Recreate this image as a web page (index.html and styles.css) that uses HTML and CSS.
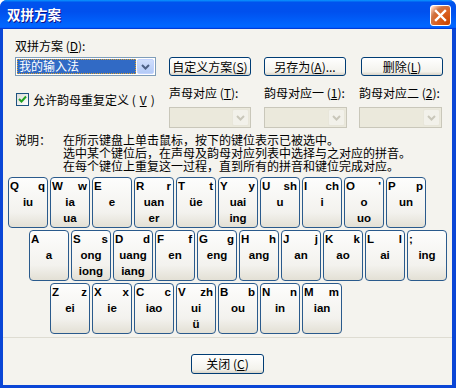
FILE: index.html
```html
<!DOCTYPE html>
<html lang="zh-CN">
<head>
    <meta charset="UTF-8">
    <title>双拼方案</title>
    <link rel="stylesheet" href="styles.css">
</head>
<body>

<div class="window">
    <div class="titlebar">
        <span class="title">双拼方案</span>
        <button class="close-x" aria-label="关闭">
            <svg width="13" height="13" viewBox="0 0 13 13"><path d="M2 2 L11 11 M11 2 L2 11" stroke="#fff" stroke-width="2.4" stroke-linecap="square"/></svg>
        </button>
    </div>

    <div class="client">
        <!-- 上部の設定欄 -->
        <div class="top-grid">
            <div class="lbl scheme-lbl">双拼方案 (<u>D</u>):</div>

            <div class="combo active">
                <div class="value"><span>我的输入法</span></div>
                <div class="arrow"><svg width="9" height="6" viewBox="0 0 9 6"><path d="M1 1 L4.5 4.5 L8 1" fill="none" stroke="#4d6185" stroke-width="2"/></svg></div>
            </div>
            <button class="btn">自定义方案(<u>S</u>)</button>
            <button class="btn">另存为(<u>A</u>)...</button>
            <button class="btn btn-del">删除(<u>L</u>)</button>

            <label class="check-row">
                <span class="checkbox"><svg width="9" height="9" viewBox="0 0 9 9"><path d="M1 4 L3.5 6.5 L8 1.5" fill="none" stroke="#21a121" stroke-width="2"/></svg></span>
                允许韵母重复定义 (<u>V</u>)
            </label>
            <div class="lbl map-lbl">声母对应 (<u>T</u>):</div>
            <div class="lbl map-lbl">韵母对应一 (<u>1</u>):</div>
            <div class="lbl map-lbl">韵母对应二 (<u>2</u>):</div>

            <div class="combo disabled c2"><div class="value"></div><div class="arrow"><svg width="9" height="6" viewBox="0 0 9 6"><path d="M1 1 L4.5 4.5 L8 1" fill="none" stroke="#c9c7ba" stroke-width="2"/></svg></div></div>
            <div class="combo disabled"><div class="value"></div><div class="arrow"><svg width="9" height="6" viewBox="0 0 9 6"><path d="M1 1 L4.5 4.5 L8 1" fill="none" stroke="#c9c7ba" stroke-width="2"/></svg></div></div>
            <div class="combo disabled"><div class="value"></div><div class="arrow"><svg width="9" height="6" viewBox="0 0 9 6"><path d="M1 1 L4.5 4.5 L8 1" fill="none" stroke="#c9c7ba" stroke-width="2"/></svg></div></div>
        </div>

        <!-- 説明 -->
        <div class="note">
            <span class="note-head">说明：</span>
            <div class="note-body">
                <p>在所示键盘上单击鼠标，按下的键位表示已被选中。</p>
                <p>选中某个键位后，在声母及韵母对应列表中选择与之对应的拼音。</p>
                <p>在每个键位上重复这一过程，直到所有的拼音和键位完成对应。</p>
            </div>
        </div>

        <!-- キーボード -->
        <div class="keyboard">
            <div class="key-row row1">
                <div class="key"><div class="key-top"><span>Q</span><span>q</span></div><div>iu</div></div>
                <div class="key"><div class="key-top"><span>W</span><span>w</span></div><div>ia</div><div>ua</div></div>
                <div class="key"><div class="key-top"><span>E</span><span></span></div><div>e</div></div>
                <div class="key"><div class="key-top"><span>R</span><span>r</span></div><div>uan</div><div>er</div></div>
                <div class="key"><div class="key-top"><span>T</span><span>t</span></div><div>üe</div></div>
                <div class="key"><div class="key-top"><span>Y</span><span>y</span></div><div>uai</div><div>ing</div></div>
                <div class="key"><div class="key-top"><span>U</span><span>sh</span></div><div>u</div></div>
                <div class="key"><div class="key-top"><span>I</span><span>ch</span></div><div>i</div></div>
                <div class="key"><div class="key-top"><span>O</span><span>'</span></div><div>o</div><div>uo</div></div>
                <div class="key"><div class="key-top"><span>P</span><span>p</span></div><div>un</div></div>
            </div>
            <div class="key-row row2">
                <div class="key"><div class="key-top"><span>A</span><span></span></div><div>a</div></div>
                <div class="key"><div class="key-top"><span>S</span><span>s</span></div><div>ong</div><div>iong</div></div>
                <div class="key"><div class="key-top"><span>D</span><span>d</span></div><div>uang</div><div>iang</div></div>
                <div class="key"><div class="key-top"><span>F</span><span>f</span></div><div>en</div></div>
                <div class="key"><div class="key-top"><span>G</span><span>g</span></div><div>eng</div></div>
                <div class="key"><div class="key-top"><span>H</span><span>h</span></div><div>ang</div></div>
                <div class="key"><div class="key-top"><span>J</span><span>j</span></div><div>an</div></div>
                <div class="key"><div class="key-top"><span>K</span><span>k</span></div><div>ao</div></div>
                <div class="key"><div class="key-top"><span>L</span><span>l</span></div><div>ai</div></div>
                <div class="key"><div class="key-top"><span>;</span><span></span></div><div>ing</div></div>
            </div>
            <div class="key-row row3">
                <div class="key"><div class="key-top"><span>Z</span><span>z</span></div><div>ei</div></div>
                <div class="key"><div class="key-top"><span>X</span><span>x</span></div><div>ie</div></div>
                <div class="key"><div class="key-top"><span>C</span><span>c</span></div><div>iao</div></div>
                <div class="key"><div class="key-top"><span>V</span><span>zh</span></div><div>ui</div><div>ü</div></div>
                <div class="key"><div class="key-top"><span>B</span><span>b</span></div><div>ou</div></div>
                <div class="key"><div class="key-top"><span>N</span><span>n</span></div><div>in</div></div>
                <div class="key"><div class="key-top"><span>M</span><span>m</span></div><div>ian</div></div>
            </div>
        </div>

        <div class="footer">
            <button class="btn close-btn">关闭 (<u>C</u>)</button>
        </div>
    </div>
</div>

</body>
</html>
```

FILE: styles.css
```css
body {
    margin: 0;
    font-family: "Noto Sans CJK SC", "DejaVu Sans", sans-serif;
    font-size: 12px;
    background: #fff;
}

/* ウィンドウ全体 */
.window {
    width: 456px;
    height: 388px;
    box-sizing: border-box;
    display: flex;
    flex-direction: column;
    background: #0a46d6;
    border-radius: 7px 7px 0 0;
    overflow: hidden;
}

.titlebar {
    flex: none;
    height: 29px;
    display: flex;
    justify-content: space-between;
    align-items: flex-start;
    padding: 0 5px 0 7px;
    background: linear-gradient(180deg, #0997ff, #0053ee 8%, #0050ee 40%, #0066ff 88%, #0066ff 93%, #005bff 95%, #003dd7 96%, #003dd7);
}
.title {
    color: #fff;
    font-weight: bold;
    font-size: 13.5px;
    line-height: 29px;
    text-shadow: 1px 1px #0f1089;
}
.close-x {
    width: 21px;
    height: 21px;
    margin-top: 5px;
    padding: 0;
    border: 1px solid #fff;
    border-radius: 3px;
    background: radial-gradient(circle at 90% 90%, #cc4600 0, #dc6527 55%, #cd7546 70%, #ffccb2 90%, #fff 100%);
    display: flex;
    align-items: center;
    justify-content: center;
}

.client {
    flex: 1;
    margin: 0 4px 3px 3px;
    background: #f4f3ee;
    color: #000;
}

/* 上部グリッド */
.top-grid {
    display: grid;
    grid-template-columns: 154px 95px 95px 84px;
    grid-template-rows: 18px 29px 21px 21px;
    margin-left: 12px;
    padding-top: 10px;
}
.lbl {
    line-height: 14px;
    white-space: nowrap;
}
.scheme-lbl { grid-column: 1 / 5; }
.map-lbl { align-self: start; }

.btn {
    box-sizing: border-box;
    height: 19px;
    padding: 0;
    border: 1px solid #003c74;
    border-radius: 3px;
    background: linear-gradient(#fff, #f3f2ec 80%, #d8d3c7);
    font-family: "Noto Sans CJK SC", sans-serif;
    font-size: 12px;
    line-height: 16px;
    color: #000;
    align-self: start;
}
.top-grid .btn { width: 82px; }
.btn-del { margin-left: 2px; }

/* コンボボックス */
.combo {
    box-sizing: border-box;
    display: flex;
    height: 19px;
    border: 1px solid #7f9db9;
    background: #fff;
    padding: 1px;
    align-self: start;
}
.combo.active { width: 141px; }
.combo .value {
    flex: 1;
    display: flex;
}
.combo.active .value span {
    flex: 1;
    background: #316ac5;
    color: #fff;
    line-height: 13px;
    padding-left: 2px;
    outline: 1px dotted #d9a030;
    outline-offset: -1px;
}
.combo .arrow {
    box-sizing: border-box;
    width: 17px;
    margin-left: 1px;
    border: 1px solid #c3d3fd;
    border-radius: 2px;
    background: linear-gradient(#d0defc, #b4cbf7);
    display: flex;
    align-items: center;
    justify-content: center;
}
.combo.disabled {
    width: 83px;
    height: 21px;
    border-color: #c9c7ba;
    background: #ebe9dc;
}
.combo.disabled.c2 { width: 82px; }
.combo.disabled .arrow {
    border-color: #e8e6da;
    background: #f2f1ea;
}
.c2 { grid-column: 2; }

/* チェックボックス */
.check-row {
    display: flex;
    align-items: center;
    gap: 4px;
    margin: 6px 0 0 1px;
    white-space: nowrap;
    align-self: start;
    grid-row: 3 / 5;
    height: 14px;
}
.checkbox {
    box-sizing: border-box;
    width: 13px;
    height: 13px;
    border: 1px solid #1c5180;
    background: linear-gradient(135deg, #dcdcd7, #fff);
    display: flex;
    align-items: center;
    justify-content: center;
}

/* 説明文 (行間が詰まっているので欧文フォントの行高を使う) */
.note {
    display: flex;
    margin: 7px 0 0 12px;
    font-family: "Liberation Sans", "Noto Sans CJK SC", sans-serif;
    line-height: 13px;
}
.note-head { width: 48px; flex: none; }
.note p { margin: 0; }

/* キーボード */
.keyboard {
    display: flex;
    flex-direction: column;
    gap: 2px;
    margin-top: 3px;
}
.key-row {
    display: flex;
    gap: 2px;
}
.row1 { padding-left: 5px; }
.row2 { padding-left: 26px; }
.row3 { padding-left: 47px; }

.key {
    box-sizing: border-box;
    width: 40px;
    height: 51px;
    border: 1px solid #2a5a8c;
    border-radius: 4px;
    background: linear-gradient(#fdfdfc, #f3f2ee 70%, #e3e0d5);
    font-family: "Liberation Sans", Arial, sans-serif;
    font-weight: bold;
    font-size: 11.5px;
    line-height: 16px;
    text-align: center;
}
.key-top {
    display: flex;
    justify-content: space-between;
    padding: 0 2px 0 1px;
}

/* 下部 */
.footer {
    margin-top: 3px;
    border-top: 1px solid #dedcd2;
    padding-top: 16px;
    display: flex;
    justify-content: center;
}
.close-btn {
    width: 73px;
    height: 20px;
}
```
